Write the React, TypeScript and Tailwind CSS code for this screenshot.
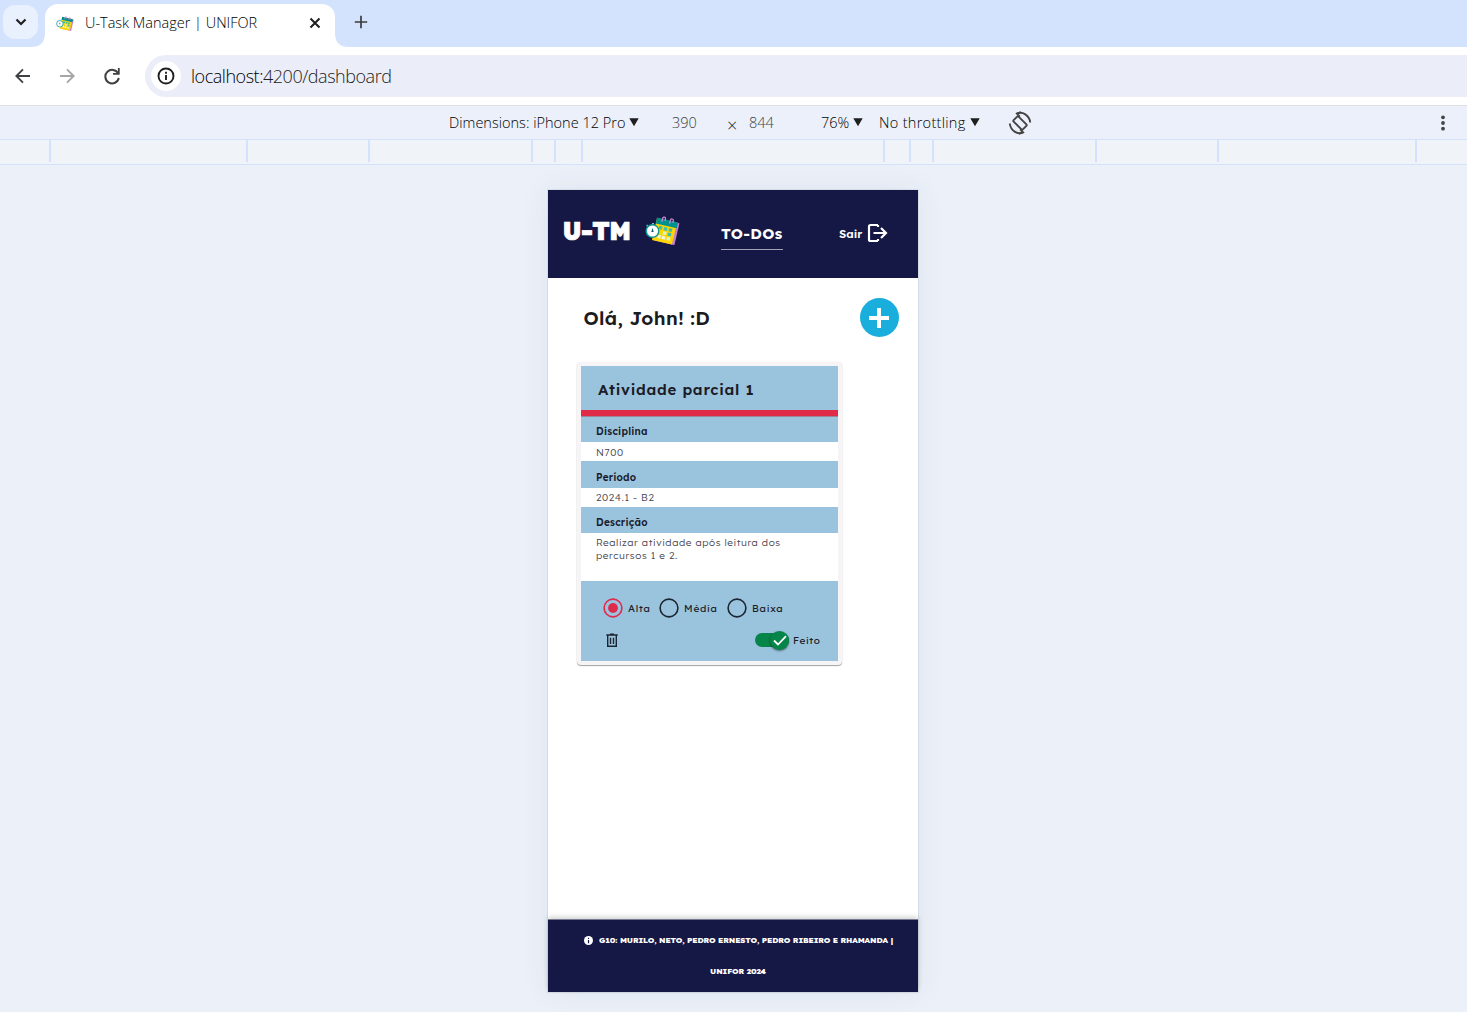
import type { ReactNode } from "react";

const rulerCells = [
  "w-[51px]", "w-[197px]", "w-[122px]", "w-[163px]", "w-[23px]", "w-[27px]",
  "w-[302px]", "w-[26px]", "w-[23px]", "w-[163px]", "w-[122px]", "w-[198px]",
];

function CalendarLogo({ className }: { className: string }) {
  return (
    <svg viewBox="0 0 35 31" className={className}>
      <g transform="translate(12 2) rotate(13)">
        <rect x="2" y="2" width="21.5" height="22.5" fill="#c77fd0" />
        <rect x="0.5" y="2" width="20.5" height="22.5" fill="#ffd500" />
        <rect x="0.5" y="1.5" width="21.5" height="6" fill="#00908f" />
        <g fill="#40bfa5">
          <rect x="4.5" y="9" width="3.400" height="3.400" />
          <rect x="9.5" y="9" width="3.400" height="3.400" />
          <rect x="14.5" y="9" width="3.400" height="3.400" />
          <rect x="9.5" y="13.5" width="3.400" height="3.400" fill="#d8f4d0" />
          <rect x="14.5" y="13.5" width="3.400" height="3.400" />
          <rect x="5" y="18" width="3.400" height="3.400" fill="#f5f5d0" />
          <rect x="9.5" y="18" width="3.400" height="3.400" fill="#f5f5d0" />
          <rect x="14.5" y="18" width="3.400" height="3.400" fill="#d8f4d0" />
        </g>
        <path d="M6 4.5V1a1.5 1.5 0 0 1 3 0v2M14 4.5V1a1.5 1.5 0 0 1 3 0v2" fill="none" stroke="#d58ad8" strokeWidth="1.2" />
      </g>
      <circle cx="7.5" cy="17" r="6.3" fill="#fff" stroke="#139a96" strokeWidth="1.5" />
      <path d="M7.5 14l-1.2 4h2.4z" fill="#07576b" />
      <path d="M7 9.5h2M1.5 12l1.2-1.2" stroke="#5fc8c0" strokeWidth="1.2" />
    </svg>
  );
}

function Caret() {
  return (
    <svg viewBox="0 0 10 9" className="-mt-px h-[9px] w-[10px]">
      <path d="M.3.3h9.4L5 8.3z" fill="#1f1f1f" />
    </svg>
  );
}

function TabStrip() {
  return (
    <div className="flex h-[47px] bg-[#d3e3fd] pl-[3px]">
      <div className="mt-[5px] flex h-[34px] w-[35px] items-center justify-center rounded-xl bg-[#e9f0fe]">
        <svg viewBox="0 0 12 8" className="h-[8px] w-[12px]">
          <path d="M1.5 1.5L6 6l4.500-4.500" fill="none" stroke="#1f1f1f" strokeWidth="2.200" />
        </svg>
      </div>
      <svg viewBox="0 0 14 14" className="-ml-[7px] h-[14px] w-[14px] self-end">
        <path d="M14 0v14H0Q14 14 14 0z" fill="#fff" />
      </svg>
      <div className="mt-[4px] flex w-[290px] items-center rounded-t-[13px] bg-white pr-[14px] pb-[6px] pl-[11px]">
        <CalendarLogo className="h-[16px] w-[18px]" />
        <span className="ml-[11px] text-[14.500px] leading-5 font-light tracking-[-0.010px] whitespace-nowrap text-black">U-Task Manager | UNIFOR</span>
        <svg viewBox="0 0 12 12" className="ml-auto h-[12px] w-[12px]">
          <path d="M1.500 1.500l9 9M10.500 1.500l-9 9" stroke="#1f1f1f" strokeWidth="2" />
        </svg>
      </div>
      <svg viewBox="0 0 14 14" className="h-[14px] w-[14px] self-end">
        <path d="M0 0v14h14Q0 14 0 0z" fill="#fff" />
      </svg>
      <svg viewBox="0 0 14 14" className="mt-[15px] ml-[4.500px] h-[14px] w-[14px]">
        <path d="M7 .8v12.400M.8 7h12.400" stroke="#3c3c3c" strokeWidth="1.700" />
      </svg>
    </div>
  );
}

function Toolbar() {
  return (
    <div className="flex h-[58px] items-center bg-white pl-[15px]">
      <svg viewBox="0 0 16 16" className="h-[16px] w-[16px]">
        <path d="M15 8H1.500M8 1.300L1.300 8 8 14.700" fill="none" stroke="#3f4144" strokeWidth="1.900" />
      </svg>
      <svg viewBox="0 0 16 16" className="ml-[28px] h-[16px] w-[16px]">
        <path d="M1 8h13.500M8 1.300L14.700 8 8 14.700" fill="none" stroke="#a6a6a6" strokeWidth="1.900" />
      </svg>
      <svg viewBox="0 0 18 18" className="ml-[28px] h-[18px] w-[18px]">
        <path d="M15.200 6.500A6.800 6.800 0 1 0 15.800 11" fill="none" stroke="#3f4144" strokeWidth="2" />
        <path d="M16.700 1v6.800H10V6h4.900V1z" fill="#3f4144" />
      </svg>
      <div className="ml-[24px] flex h-[42px] flex-1 items-center rounded-l-full bg-[#ebeef8] pl-[6px]">
        <div className="flex h-[30px] w-[30px] items-center justify-center rounded-full bg-white">
          <svg viewBox="0 0 18 18" className="h-[18px] w-[18px]">
            <circle cx="9" cy="9" r="7.500" fill="none" stroke="#1f1f1f" strokeWidth="1.900" />
            <path d="M9 8v5M9 4.700v2" stroke="#1f1f1f" strokeWidth="1.900" />
          </svg>
        </div>
        <span className="ml-[10px] text-[18px] font-light tracking-[-0.470px] whitespace-nowrap text-[#222]">
          <span className="text-black">localhost:</span>4200/dashboard
        </span>
      </div>
    </div>
  );
}

function DeviceBar() {
  return (
    <div className="flex h-[35px] items-center border-t border-b border-t-[#dfe1e5] border-b-[#d3e3fd] bg-[#ebf0fa] text-[14.500px] font-light whitespace-nowrap text-black">
      <div className="ml-[449px] flex w-[223px] items-center gap-[4px]">
        <span className="tracking-[0.020px]">Dimensions: iPhone 12 Pro</span>
        <Caret />
      </div>
      <span className="w-[55px] text-[#3c3f43]">390</span>
      <span className="mt-[4px] w-[22px] text-[18px] leading-none text-[#222]">×</span>
      <span className="w-[72px] text-[#3c3f43]">844</span>
      <div className="flex w-[58px] items-center gap-[4px]">
        <span>76%</span>
        <Caret />
      </div>
      <div className="flex w-[129px] items-center gap-[4px]">
        <span className="tracking-[0.300px]">No throttling</span>
        <Caret />
      </div>
      <svg viewBox="0 0 24 24" className="h-[24px] w-[24px]" fill="none" stroke="#444" strokeWidth="1.900">
        <rect x="8.500" y="5.500" width="7" height="13" rx="1" transform="rotate(-45 12 12)" />
        <path d="M8.500 2.800C14.500-.2 21.500 4.500 22.200 11.500M15.500 21.200C9.500 24.200 2.500 19.500 1.800 12.500" />
        <path d="M13 1.200L9 2.600l2.800 3M11 22.800l4-1.400-2.800-3" />
      </svg>
      <svg viewBox="0 0 4 16" className="mr-[22px] ml-auto h-[16px] w-[4px]" fill="#444">
        <circle cx="2" cy="2.300" r="1.900" />
        <circle cx="2" cy="8" r="1.900" />
        <circle cx="2" cy="13.700" r="1.900" />
      </svg>
    </div>
  );
}

function Label({ children }: { children: ReactNode }) {
  return <div className="bg-[#9ac4de] pl-[15px] text-[10px] font-semibold text-[#1b1b2b]">{children}</div>;
}

function Radio({ label, checked = false, className }: { label: string; checked?: boolean; className: string }) {
  return (
    <label className={`flex items-center gap-[5px] ${className}`}>
      <svg viewBox="0 0 20 20" className={checked ? "h-[20px] w-[20px] text-[#df2b4b]" : "h-[20px] w-[20px] text-[#1c2632]"}>
        <circle cx="10" cy="10" r="8.900" fill="none" stroke="currentColor" strokeWidth="1.600" />
        {checked && <circle cx="10" cy="10" r="4.900" fill="currentColor" />}
      </svg>
      <span>{label}</span>
    </label>
  );
}

function TaskCard() {
  return (
    <article className="mt-[25px] ml-[29px] h-[303px] w-[265px] rounded-[4px] bg-[#f6f4f6] px-[4px] pt-[4px] text-[10px] text-[#1c1b26] shadow-[0_1px_1px_rgba(0,0,0,0.35),0_0_2px_rgba(0,0,0,0.08)]">
      <div className="bg-white">
        <h2 className="h-[44px] bg-[#9ac4de] pl-[17px] text-[15px] leading-[47px] font-semibold tracking-[0.740px]">Atividade parcial 1</h2>
        <div className="h-[7px] border-b border-[#9d8497] bg-[#df2b47]" />
        <Label><div className="h-[25px] leading-[30px] tracking-[0.260px]">Disciplina</div></Label>
        <div className="h-[19px] pl-[15px] leading-[21px] font-light tracking-[0.650px] text-[#45424c]">N700</div>
        <Label><div className="h-[27px] leading-[34px] tracking-[0.260px]">Período</div></Label>
        <div className="h-[19px] pl-[15px] leading-[20px] font-light tracking-[0.620px] text-[#45424c]">2024.1 - B2</div>
        <Label><div className="h-[26px] leading-[31px] tracking-[0.260px]">Descrição</div></Label>
        <p className="h-[48px] pt-[3px] pl-[15px] leading-[13px] font-light tracking-[0.610px] text-[#45424c]">
          Realizar atividade após leitura dos<br />percursos 1 e 2.
        </p>
        <div className="h-[80px] bg-[#9ac4de] pt-[17px]">
          <div className="flex h-[20px] items-center pl-[22px] tracking-[0.750px]">
            <Radio label="Alta" checked className="w-[56px]" />
            <Radio label="Média" className="w-[68px]" />
            <Radio label="Baixa" className="w-[62px]" />
          </div>
          <div className="mt-[12px] flex h-[20px] items-center pr-[17px] pl-[25px]">
            <svg viewBox="0 0 12 14" className="h-[14px] w-[12px]" fill="none" stroke="#1c2632" strokeWidth="1.400">
              <path d="M.3 2h11.400M4 1.200h4M1.700 2.500v10.700h8.600V2.500M4.500 4.800v6.200M7.500 4.800v6.200" />
            </svg>
            <div className="ml-auto flex h-[14px] w-[34px] items-center justify-end rounded-full bg-[#068548]">
              <div className="flex h-[19px] w-[19px] shrink-0 items-center justify-center rounded-full bg-[#068548] shadow-[0_1px_2px_rgba(0,0,0,0.5)]">
                <svg viewBox="0 0 14 11" className="h-[11px] w-[14px]">
                  <path d="M1 5.500l4 4L13 1.200" fill="none" stroke="#fff" strokeWidth="1.800" />
                </svg>
              </div>
            </div>
            <span className="ml-[4px] w-[28px] tracking-[0.600px]">Feito</span>
          </div>
        </div>
      </div>
    </article>
  );
}

function Phone() {
  return (
    <div className="mt-[25px] mr-[549px] ml-auto flex h-[802px] w-[370px] flex-col bg-white font-['Lexend','Inter','Liberation_Sans',sans-serif] shadow-[0_0_0_1px_rgba(0,0,0,0.06),0_0_30px_rgba(60,70,90,0.07)]">
      <header className="flex h-[88px] shrink-0 bg-[#151744] text-white">
        <span className="mt-[25px] ml-[14.500px] w-[82.500px] text-[24.500px] leading-[32px] font-black tracking-[-0.650px] whitespace-nowrap [-webkit-text-stroke:0.7px_white]">U-TM</span>
        <CalendarLogo className="mt-[24px] h-[31px] w-[35px]" />
        <div className="mt-[34px] ml-[41px] h-[26px] w-[62px] border-b border-[#a0a1b4] text-[15px] leading-[20px] font-bold tracking-[0.350px] whitespace-nowrap">TO-DOs</div>
        <div className="mt-[33px] ml-[56px] flex h-[20px] items-center text-[11.500px] font-semibold">
          <span className="w-[28px] pt-[2px]">Sair</span>
          <svg viewBox="0 0 21 20" className="h-[20px] w-[21px]" fill="none" stroke="#fff" strokeWidth="2.200">
            <path d="M11 2H3.500Q2 2 2 3.500v13Q2 18 3.500 18H11M11 2v2M11 18v-2M6.500 10h12M14 5l5 5-5 5" />
          </svg>
        </div>
      </header>
      <main className="flex-1">
        <div className="mt-[20px] flex h-[39px] items-center justify-between pr-[19.500px] pl-[35.500px]">
          <h1 className="pt-px text-[19px] leading-6 font-semibold tracking-[0.380px] text-[#1c1b20]">Olá, John! :D</h1>
          <div className="flex h-[39px] w-[39px] items-center justify-center rounded-full bg-[#1aaedd]">
            <svg viewBox="0 0 20 20" className="h-[20px] w-[20px]">
              <path d="M10 0v20M0 10h20" stroke="#fff" strokeWidth="4" />
            </svg>
          </div>
        </div>
        <TaskCard />
      </main>
      <footer className="h-[73px] shrink-0 border-t border-[#777990] bg-[#151744] pt-[5px] pl-[10px] text-center text-[8px] leading-[31px] font-extrabold whitespace-nowrap text-white shadow-[0_-2px_5px_rgba(0,0,0,0.18)]">
        <div className="flex items-center pl-[26px]">
          <svg viewBox="0 0 10 10" className="mr-[6px] h-[9px] w-[9px]">
            <circle cx="5" cy="5" r="5" fill="#fff" />
            <path d="M5 4.500V8M5 2v1.400" stroke="#151744" strokeWidth="1.300" />
          </svg>
          <span className="tracking-[-0.120px]">G10: MURILO, NETO, PEDRO ERNESTO, PEDRO RIBEIRO E RHAMANDA |</span>
        </div>
        <div className="tracking-[-0.100px]">UNIFOR 2024</div>
      </footer>
    </div>
  );
}

export default function App() {
  return (
    <div className="h-[1012px] overflow-hidden bg-[#ebf0f9] font-['Open_Sans','Noto_Sans',sans-serif]">
      <TabStrip />
      <Toolbar />
      <DeviceBar />
      <div className="flex h-[25px] border-b border-[#d3e3fd] bg-[#f0f4f9]">
        {rulerCells.map((width, i) => (
          <div key={i} className={`${width} h-[22px] shrink-0 border-r-2 border-[#d3e3fd]`} />
        ))}
      </div>
      <Phone />
    </div>
  );
}
